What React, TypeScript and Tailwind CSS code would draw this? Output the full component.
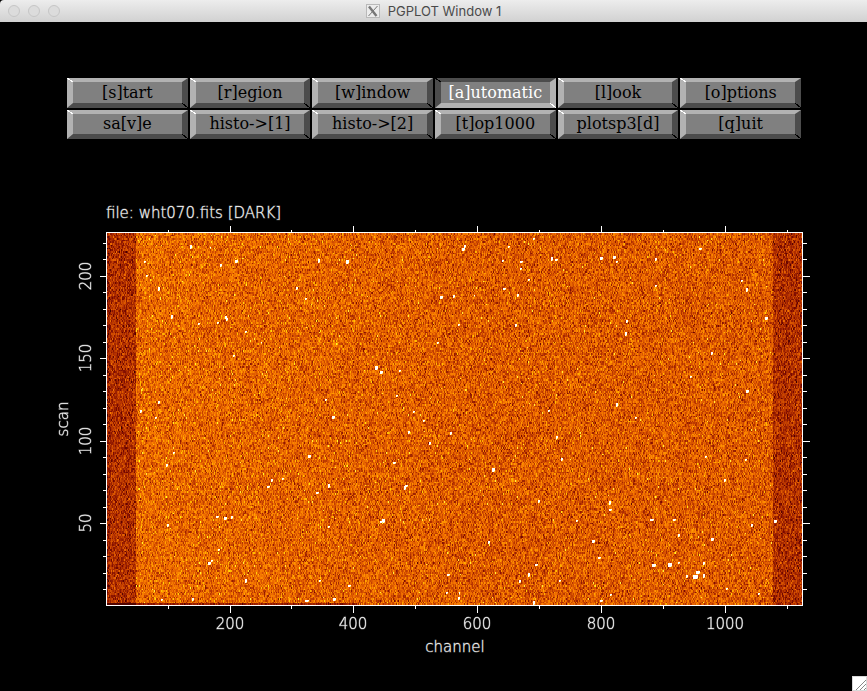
import { useEffect, useRef } from "react";
import { clsx } from "clsx";

const BUTTONS = [
  "[s]tart", "[r]egion", "[w]indow", "[a]utomatic", "[l]ook", "[o]ptions",
  "sa[v]e", "histo->[1]", "histo->[2]", "[t]op1000", "plotsp3[d]", "[q]uit",
];

// Plot frame inside the chart's drawing area
const LEFT = 106;
const RIGHT = 802;
const TOP = 37;
const BOTTOM = 410;
const WIDTH = RIGHT - LEFT - 1;
const HEIGHT = BOTTOM - TOP - 1;
const CHANNELS = 1124;
const SCANS = 226;

const xOf = (channel: number) => Math.round(LEFT + ((channel - 0.5) * (RIGHT - LEFT)) / CHANNELS);
const yOf = (scan: number) => Math.round(BOTTOM - ((scan - 0.5) * (BOTTOM - TOP)) / SCANS);

// Heat colour table: position, red, green, blue
const HEAT: number[][] = [
  [0, 60, 0, 0],
  [0.15, 120, 8, 0],
  [0.35, 180, 50, 0],
  [0.5, 216, 84, 0],
  [0.65, 244, 116, 0],
  [0.8, 255, 150, 0],
  [0.93, 255, 200, 0],
  [1, 255, 255, 40],
];

function heat(value: number) {
  const v = Math.min(1, Math.max(0, value));
  let i = 1;
  while (i < HEAT.length - 1 && HEAT[i][0] < v) i++;
  const a = HEAT[i - 1];
  const b = HEAT[i];
  const t = (v - a[0]) / (b[0] - a[0]);
  return [a[1] + (b[1] - a[1]) * t, a[2] + (b[2] - a[2]) * t, a[3] + (b[3] - a[3]) * t];
}

function seeded(seed: number) {
  let s = seed;
  return () => {
    s = (s + 0x6d2b79f5) | 0;
    let t = Math.imul(s ^ (s >>> 15), 1 | s);
    t = (t + Math.imul(t ^ (t >>> 7), 61 | t)) ^ t;
    return ((t ^ (t >>> 14)) >>> 0) / 4294967296;
  };
}

// Cosmic ray hits in frame pixels: x, y, width, height
const HITS: number[][] = [
  [83, 12, 2, 4], [37, 28, 2, 2], [39, 42, 2, 2], [51, 54, 2, 4], [64, 82, 2, 4],
  [113, 31, 2, 3], [128, 27, 3, 3], [103, 14, 1, 2], [118, 83, 2, 3], [119, 85, 2, 3],
  [110, 89, 2, 2], [91, 90, 2, 2], [138, 98, 2, 2], [126, 122, 2, 2], [154, 109, 1, 2],
  [211, 26, 2, 4], [239, 27, 3, 4], [189, 54, 2, 3], [198, 65, 2, 2], [355, 15, 3, 3],
  [357, 12, 2, 3], [401, 13, 2, 2], [395, 27, 2, 2], [413, 28, 3, 2], [413, 35, 2, 2],
  [444, 24, 2, 4], [426, 5, 2, 2], [448, 26, 3, 2], [493, 24, 3, 3], [506, 23, 3, 3],
  [509, 28, 2, 2], [548, 25, 2, 3], [592, 15, 3, 2], [634, 47, 2, 2], [639, 55, 2, 4],
  [658, 84, 3, 3], [333, 63, 3, 3], [346, 62, 2, 3], [367, 62, 1, 2], [410, 61, 2, 3],
  [421, 46, 2, 2], [396, 55, 3, 2], [351, 91, 2, 2], [408, 91, 2, 3], [548, 52, 2, 2],
  [519, 87, 2, 3], [518, 99, 2, 4], [604, 119, 2, 3], [330, 109, 2, 2], [268, 133, 3, 4],
  [273, 138, 3, 3], [292, 137, 2, 2], [289, 162, 2, 2], [51, 168, 2, 3], [33, 177, 2, 3],
  [48, 184, 2, 2], [218, 166, 2, 2], [225, 183, 3, 3], [66, 219, 2, 2], [59, 231, 2, 3],
  [201, 222, 3, 3], [301, 198, 2, 3], [322, 209, 2, 3], [306, 178, 2, 2], [316, 187, 2, 2],
  [343, 199, 2, 3], [286, 229, 3, 2], [385, 235, 3, 4], [449, 203, 2, 3], [454, 225, 2, 3],
  [441, 177, 2, 2], [509, 170, 2, 4], [528, 184, 2, 2], [583, 143, 2, 2], [639, 157, 3, 3],
  [598, 223, 2, 2], [638, 226, 2, 2], [164, 246, 2, 3], [175, 245, 2, 2], [160, 253, 3, 2],
  [221, 251, 2, 4], [109, 283, 3, 2], [117, 284, 3, 3], [124, 283, 2, 3], [60, 291, 2, 3],
  [209, 259, 3, 2], [275, 286, 3, 4], [273, 288, 3, 2], [298, 252, 3, 2], [297, 253, 2, 4],
  [221, 293, 2, 2], [381, 308, 2, 3], [431, 267, 2, 3], [502, 268, 2, 4], [502, 276, 3, 2],
  [469, 287, 2, 2], [485, 307, 3, 3], [543, 286, 4, 2], [566, 286, 3, 2], [571, 301, 2, 3],
  [604, 305, 3, 3], [617, 246, 2, 3], [644, 291, 2, 3], [667, 287, 3, 3], [101, 329, 3, 3],
  [104, 327, 2, 2], [138, 346, 2, 4], [85, 365, 2, 3], [54, 366, 2, 2], [111, 316, 2, 2],
  [212, 347, 2, 2], [198, 367, 4, 2], [226, 365, 3, 3], [241, 352, 3, 2], [340, 341, 3, 2],
  [339, 359, 2, 2], [351, 364, 2, 3], [352, 359, 1, 3], [412, 347, 2, 3], [421, 340, 2, 4],
  [428, 331, 3, 2], [452, 347, 2, 2], [426, 368, 2, 4], [491, 324, 3, 2], [545, 331, 4, 3],
  [561, 330, 4, 4], [571, 329, 2, 2], [586, 342, 5, 4], [589, 338, 4, 3], [596, 329, 2, 3],
  [579, 342, 2, 3], [596, 341, 2, 4], [619, 355, 2, 2], [651, 360, 2, 2], [648, 372, 2, 1],
  [503, 361, 2, 2], [493, 367, 3, 2],
];

function paint(canvas: HTMLCanvasElement) {
  const ctx = canvas.getContext("2d");
  if (!ctx) return;
  const random = seeded(70);
  const image = ctx.createImageData(WIDTH, HEIGHT);
  const put = (x: number, y: number, c: number[]) => {
    if (x < 0 || y < 0 || x >= WIDTH || y >= HEIGHT) return;
    const o = (y * WIDTH + x) * 4;
    image.data[o] = c[0];
    image.data[o + 1] = c[1];
    image.data[o + 2] = c[2];
    image.data[o + 3] = 255;
  };
  const brightColumns = [213, 448, 549];
  for (let s = 0; s < SCANS; s++) {
    const y0 = Math.round((s * HEIGHT) / SCANS);
    const y1 = Math.round(((s + 1) * HEIGHT) / SCANS);
    for (let x = 0; x < WIDTH; x++) {
      const dark = x < 29 || x >= WIDTH - 29;
      const mean = dark ? (x < 3 ? 0.27 : 0.34) : 0.6 - 0.07 * Math.min(1, x / 380);
      const lift = brightColumns.includes(x) ? 0.08 : 0;
      const noise = (random() + random() + random() + random() - 2) * (dark ? 0.2 : 0.25);
      let colour = heat(mean + lift + noise);
      if (!dark && random() < 0.0022) colour = [255, 240, 60];
      if (s === SCANS - 1 && x < 250) colour = heat(dark ? 0.05 : 0.25 + noise * 0.5);
      for (let y = y0; y < y1; y++) put(x, y, colour);
    }
  }
  for (const [x, y, w, h] of HITS) {
    for (let j = 0; j < h; j++) {
      for (let i = 0; i < w; i++) {
        const corner = i === w - 1 && j === h - 1;
        put(x + i, y + j, corner ? [255, 225, 90] : [255, 255, 255]);
      }
    }
  }
  ctx.putImageData(image, 0, 0);
}

function PlotButton({ label, active }: { label: string; active: boolean }) {
  return (
    <button
      type="button"
      aria-pressed={active}
      className={clsx(
        "relative flex h-full w-full items-center justify-center border-t-4 border-r-6 border-b-5 border-l-6 bg-[#808080] font-['DejaVu_Serif',serif] text-[16px] leading-5",
        active
          ? "border-t-[#4c4c4c] border-r-[#b2b2b2] border-b-[#b2b2b2] border-l-[#4c4c4c] text-white"
          : "border-t-[#b2b2b2] border-r-[#4c4c4c] border-b-[#4c4c4c] border-l-[#b2b2b2] text-black",
      )}
    >
      <svg className="absolute -top-1 -left-1.5" width="6" height="4" shapeRendering="crispEdges" aria-hidden="true">
        <path d="M0 0L6 4" stroke={active ? "#000" : "#fff"} />
      </svg>
      {label}
      <svg className="absolute -right-1.5 -bottom-[5px]" width="6" height="5" shapeRendering="crispEdges" aria-hidden="true">
        <path d="M0 0L6 5" stroke={active ? "#fff" : "#000"} />
      </svg>
    </button>
  );
}

function Chart() {
  const canvas = useRef<HTMLCanvasElement>(null);
  useEffect(() => {
    if (canvas.current) paint(canvas.current);
  }, []);

  const channels = Array.from({ length: 11 }, (_, i) => (i + 1) * 100);
  const scans = Array.from({ length: 22 }, (_, i) => (i + 1) * 10);

  return (
    <svg
      viewBox="0 0 867 465"
      role="img"
      aria-label="Detector frame, scan against channel"
      className="block h-auto w-full font-['DejaVu_Sans',sans-serif] text-[15px] font-extralight"
      fill="#fff"
    >
      <text x="106" y="23" stroke="#fff" strokeOpacity="0.35">file: wht070.fits [DARK]</text>
      <foreignObject x={LEFT + 1} y={TOP + 1} width={WIDTH} height={HEIGHT}>
        <canvas ref={canvas} width={WIDTH} height={HEIGHT} className="block h-full w-full" />
      </foreignObject>
      <g stroke="#fff" fill="none" shapeRendering="crispEdges" transform="translate(0.5 0.5)">
        <rect x={LEFT} y={TOP} width={RIGHT - LEFT} height={BOTTOM - TOP} />
        {channels.map((c) => {
          const n = c % 200 === 0 ? 7 : 3;
          return <path key={c} d={`M${xOf(c)} ${TOP}v-${n}M${xOf(c)} ${BOTTOM}v${n}`} />;
        })}
        {scans.map((s) => {
          const n = s % 50 === 0 ? 7 : 4;
          return <path key={s} d={`M${LEFT} ${yOf(s)}h-${n}M${RIGHT} ${yOf(s)}h${n}`} />;
        })}
      </g>
      <g textAnchor="middle" stroke="#fff" strokeOpacity="0.35">
        {[200, 400, 600, 800, 1000].map((c) => (
          <text key={c} x={xOf(c)} y="434">{c}</text>
        ))}
        {[50, 100, 150, 200].map((s) => (
          <text key={s} transform={`translate(91 ${yOf(s)}) rotate(-90)`}>{s}</text>
        ))}
        <text x="455" y="457">channel</text>
        <text transform="translate(68 224) rotate(-90)">scan</text>
      </g>
    </svg>
  );
}

export default function App() {
  return (
    <div className="relative flex min-h-screen flex-col bg-black">
      <header className="relative flex h-[22px] items-center justify-center rounded-tl bg-linear-to-b from-[#ededed] to-[#d1d1d1]">
        <div className="absolute left-2 flex gap-2">
          {["Close", "Minimize", "Zoom"].map((name) => (
            <button
              key={name}
              type="button"
              aria-label={name}
              className="size-3 rounded-full border border-[#c6c6c6] bg-[#dcdcdc]"
            />
          ))}
        </div>
        <h1 className="flex items-center gap-2 font-[Inter,sans-serif] text-[13px] leading-4 text-[#4a4a4a]">
          <svg width="14" height="14" viewBox="0 0 14 14" aria-hidden="true">
            <rect x="0.5" y="0.5" width="13" height="13" fill="#ececec" stroke="#b9b9b9" />
            <path d="M3 2.5L10.5 12" stroke="#777" strokeWidth="2.4" />
            <path d="M11.5 2L2.5 12" stroke="#777" />
          </svg>
          PGPLOT Window 1
        </h1>
      </header>
      <main className="flex-1 pt-14">
        <div className="grid grid-cols-6 grid-rows-[30px_29px] gap-0.5 pr-[66px] pl-[67px]">
          {BUTTONS.map((label) => (
            <PlotButton key={label} label={label} active={label === "[a]utomatic"} />
          ))}
        </div>
        <div className="pt-14">
          <Chart />
        </div>
      </main>
      <div className="absolute right-0 bottom-0 size-[15px] border border-[#d8d8d8] bg-white">
        <svg width="14" height="14" viewBox="0 0 14 14" stroke="#888" aria-hidden="true">
          <path d="M3 13L13 3M7 13L13 7M11 13L13 11" />
        </svg>
      </div>
    </div>
  );
}
